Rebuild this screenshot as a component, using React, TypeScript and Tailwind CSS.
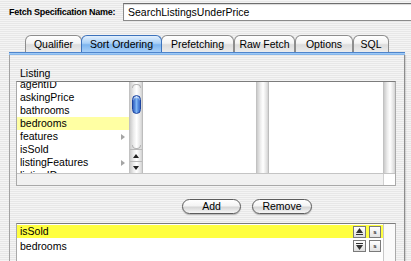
import clsx from "clsx";

const stripes =
  "[background-image:repeating-linear-gradient(180deg,#f4f4f4_0px,#f4f4f4_1px,#e7e7e7_1px,#e7e7e7_2px)]";

const listing = [
  { name: "agentID" },
  { name: "askingPrice" },
  { name: "bathrooms" },
  { name: "bedrooms", selected: true },
  { name: "features", more: true },
  { name: "isSold" },
  { name: "listingFeatures", more: true },
  { name: "listingID" },
];

function Tab({ label, active, className }: { label: string; active?: boolean; className: string }) {
  return (
    <div
      className={clsx(
        "flex h-[17px] items-center justify-center rounded-t-[6px] border border-b-0 text-[10.5px] leading-none text-black",
        active
          ? "z-10 border-[#3d72bb] bg-[linear-gradient(#e3f0fd,#a9d0f7_45%,#7db5ef_55%,#a7cff8)]"
          : "border-[#8d8d8d] bg-[linear-gradient(#ffffff,#f3f3f3_45%,#dcdcdc_55%,#ececec)]",
        className,
      )}
    >
      {label}
    </div>
  );
}

function Track({ className }: { className?: string }) {
  return (
    <div
      className={clsx(
        "h-full w-[12px] shrink-0 border-l border-[#c2c2c2] bg-[linear-gradient(90deg,#cbcbcb,#ececec_30%,#ffffff_55%,#e4e4e4_85%,#d2d2d2)]",
        className,
      )}
    />
  );
}

function Arrow({ up }: { up?: boolean }) {
  return (
    <svg width="6" height="4" viewBox="0 0 6 4">
      <polygon points={up ? "3,0 6,4 0,4" : "0,0 6,0 3,4"} fill="#222" />
    </svg>
  );
}

function SortButton({ up }: { up?: boolean }) {
  return (
    <div className="flex h-[12px] w-[13px] flex-col items-center justify-center gap-[1px] border border-[#7a7a7a] bg-[linear-gradient(#ffffff,#dedede)]">
      {!up && <div className="h-[1px] w-[7px] bg-[#333]" />}
      <svg width="7" height="5" viewBox="0 0 7 5">
        <polygon points={up ? "3.5,0 7,5 0,5" : "0,0 7,0 3.5,5"} fill="#333" />
      </svg>
      {up && <div className="h-[1px] w-[7px] bg-[#333]" />}
    </div>
  );
}

function CaseButton() {
  return (
    <div className="flex h-[12px] w-[12px] items-center justify-center border border-[#7a7a7a] bg-[linear-gradient(#ffffff,#e2e2e2)] text-[6px] font-bold leading-none text-[#222]">
      s
    </div>
  );
}

function AquaButton({ label, className }: { label: string; className: string }) {
  return (
    <div
      className={clsx(
        "flex h-[15px] items-center justify-center rounded-full border border-[#5c5c5c] bg-[linear-gradient(#ffffff,#f4f4f4_45%,#d6d6d6_55%,#f6f6f6)] text-[10.5px] leading-none text-black shadow-[0_1px_1px_rgba(0,0,0,0.25)]",
        className,
      )}
    >
      {label}
    </div>
  );
}

export default function App() {
  return (
    <div
      className={clsx(
        "relative h-[261px] w-[411px] overflow-hidden text-black",
        stripes,
        "font-['Liberation_Sans',Arial,sans-serif]",
      )}
    >
      {/* name field */}
      <div className="flex h-[24px] items-start pt-[3px]">
        <div className="w-[123px] shrink-0 whitespace-nowrap pl-[9px] pt-[5px] text-[9px] font-bold leading-none tracking-[-0.25px]">
          Fetch Specification Name:
        </div>
        <div className="-mr-[4px] flex h-[18px] flex-1 items-center border border-[#8a8a8a] border-t-[#6d6d6d] bg-white pl-[4px] text-[10.5px] leading-none shadow-[inset_0_1px_1px_rgba(0,0,0,0.15)]">
          SearchListingsUnderPrice
        </div>
      </div>

      {/* tabs */}
      <div className="mt-[11px] flex pl-[25px]">
        <Tab label="Qualifier" className="w-[57px]" />
        <Tab label="Sort Ordering" active className="w-[81px] -mx-px" />
        <Tab label="Prefetching" className="w-[73px]" />
        <Tab label="Raw Fetch" className="w-[61px]" />
        <Tab label="Options" className="w-[58px]" />
        <Tab label="SQL" className="w-[36px]" />
      </div>

      {/* panel */}
      <div className="ml-[9px] w-[396px]">
        <div className="h-[3px] border-t border-[#4f85cc] bg-[linear-gradient(#a8d0f8,#7eb3ee)]" />
        <div className="h-[220px] border-x border-[#a2a2a2] border-r-[#8c8c8c] pl-[6px] shadow-[1px_0_1px_rgba(0,0,0,0.12)]">
          <div className="h-[26px] pl-[4px] pt-[13px] text-[10.5px] leading-none">Listing</div>

          {/* browser */}
          <div className="w-[380px] border border-[#a9a9a9] border-t-[#7c7c7c]">
            <div className="flex h-[91px]">
              <div className="flex w-[125px]">
                <div className="relative flex-1 overflow-hidden bg-white">
                  <div className="-mt-[4px]">
                    {listing.map((row) => (
                      <div
                        key={row.name}
                        className={clsx(
                          "flex h-[13px] items-center justify-between pl-[3px] pr-[4px] text-[10.5px] leading-none",
                          row.selected && "bg-[#ffffa3]",
                        )}
                      >
                        <span>{row.name}</span>
                        {row.more && (
                          <svg width="4" height="6" viewBox="0 0 4 6">
                            <polygon points="0,0 4,3 0,6" fill="#a5a5a5" />
                          </svg>
                        )}
                      </div>
                    ))}
                  </div>
                </div>
                <div className="flex h-full w-[13px] shrink-0 flex-col items-center border-l border-[#c2c2c2] bg-[linear-gradient(90deg,#cbcbcb,#ececec_30%,#ffffff_55%,#e4e4e4_85%,#d2d2d2)]">
                  <div className="mt-[2px] h-[4px] w-[9px] rounded-t-full border-x border-t border-[#b5b5b5]" />
                  <div className="mt-[7px] h-[19px] w-[9px] rounded-full border border-[#1d45a0] bg-[linear-gradient(90deg,#2657bd,#7fb6f5_50%,#2a5fc6)] shadow-[inset_0_2px_1px_rgba(255,255,255,0.6)]" />
                  <div className="flex-1" />
                  <div className="h-[4px] w-[9px] rounded-b-full border-x border-b border-[#b5b5b5]" />
                  <div className="flex h-[12px] w-full items-center justify-center border-t border-[#b9b9b9]">
                    <Arrow up />
                  </div>
                  <div className="flex h-[12px] w-full items-center justify-center border-t border-[#b9b9b9]">
                    <Arrow />
                  </div>
                </div>
              </div>
              <div className="w-[2px] border-l border-[#bdbdbd] bg-white" />
              <div className="flex w-[124px]">
                <div className="flex-1 bg-white" />
                <Track />
              </div>
              <div className="w-[2px] border-l border-[#bdbdbd] bg-white" />
              <div className="flex flex-1">
                <div className="flex-1 bg-white" />
                <Track />
              </div>
            </div>
            <div className="flex h-[12px] border-t border-[#c4c4c4] bg-[#f1f1f1]">
              <div className="flex-1" />
              <div className="h-full w-[12px] border-l border-[#d0d0d0] bg-white" />
            </div>
          </div>

          {/* buttons */}
          <div className="mt-[13px] flex gap-[11px] pl-[166px]">
            <AquaButton label="Add" className="w-[59px]" />
            <AquaButton label="Remove" className="w-[60px]" />
          </div>

          {/* sort orderings */}
          <div className="mt-[9px] flex h-[60px] w-[380px] border border-[#a9a9a9] border-t-[#7c7c7c] bg-white">
            <div className="flex-1 pt-[1px]">
              <div className="flex h-[13px] items-center bg-[#ffff40] pl-[3px] pr-[2px] text-[10.5px] leading-none">
                <span className="flex-1">isSold</span>
                <div className="flex gap-[3px]">
                  <SortButton up />
                  <CaseButton />
                </div>
              </div>
              <div className="mt-[1px] flex h-[14px] items-center pl-[3px] pr-[2px] text-[10.5px] leading-none">
                <span className="flex-1">bedrooms</span>
                <div className="flex gap-[3px]">
                  <SortButton />
                  <CaseButton />
                </div>
              </div>
            </div>
            <div className="h-full w-[12px] border-l border-[#c8c8c8] bg-[#fafafa]" />
          </div>
        </div>
      </div>
    </div>
  );
}
